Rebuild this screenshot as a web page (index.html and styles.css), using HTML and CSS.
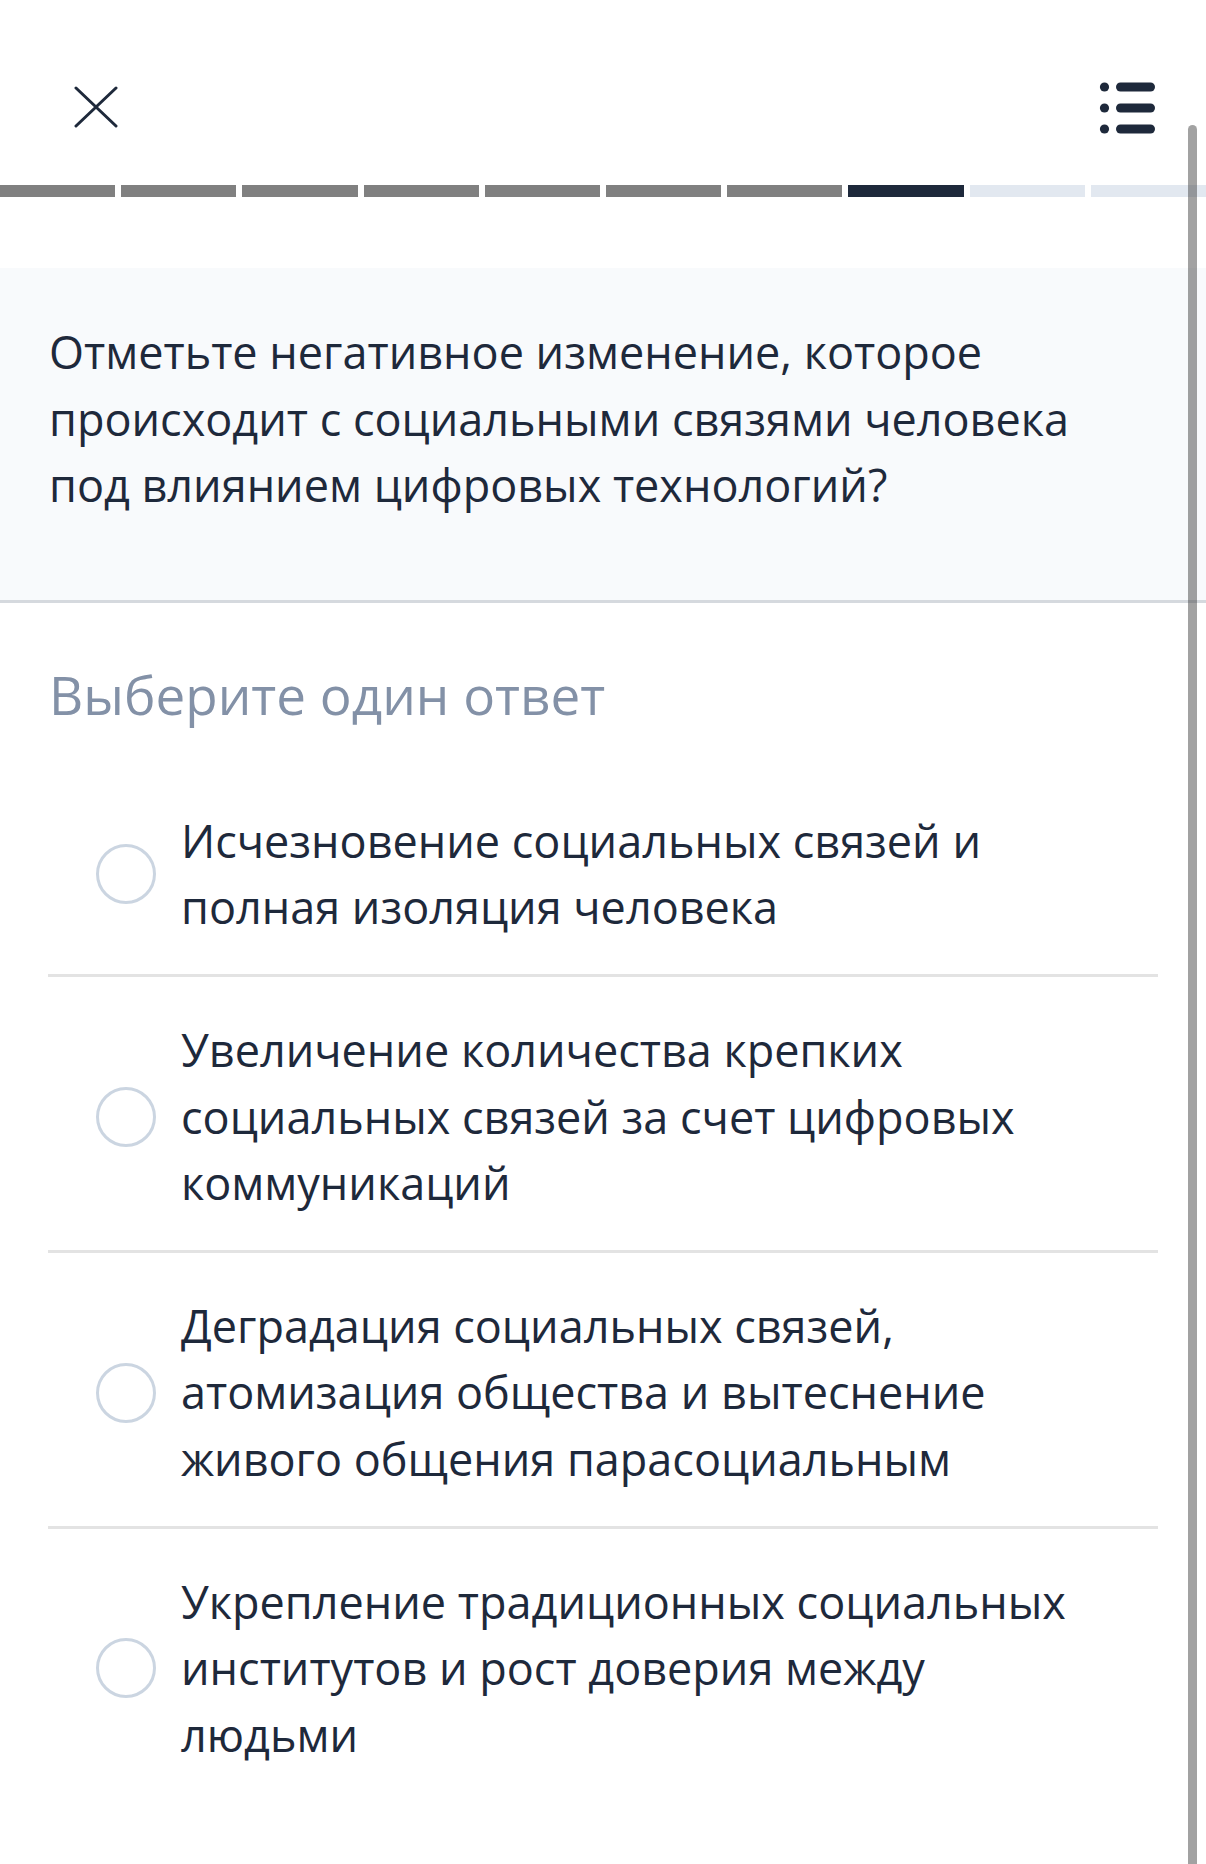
FILE: index.html
```html
<!DOCTYPE html>
<html lang="ru">
<head>
<meta charset="utf-8">
<title>Вопрос</title>
<link rel="stylesheet" href="styles.css">
</head>
<body>
<div class="page">
  <header class="topbar">
    <svg class="icon-close" width="44" height="44" viewBox="0 0 44 44" aria-label="Закрыть">
      <path d="M2 3 L42 41 M42 3 L2 41" stroke="#1e293b" stroke-width="3" stroke-linecap="round" fill="none"/>
    </svg>
    <svg class="icon-list" width="60" height="60" viewBox="0 0 60 60" aria-label="Список">
      <circle cx="6.5" cy="6" r="4.6" fill="#1e293b"/>
      <circle cx="6.5" cy="27" r="4.6" fill="#1e293b"/>
      <circle cx="6.5" cy="48" r="4.6" fill="#1e293b"/>
      <rect x="18" y="1.5" width="39" height="9" rx="4.5" fill="#1e293b"/>
      <rect x="18" y="22.5" width="39" height="9" rx="4.5" fill="#1e293b"/>
      <rect x="18" y="43.5" width="39" height="9" rx="4.5" fill="#1e293b"/>
    </svg>
  </header>

  <div class="progress">
    <span class="seg done"></span>
    <span class="seg done"></span>
    <span class="seg done"></span>
    <span class="seg done"></span>
    <span class="seg done"></span>
    <span class="seg done"></span>
    <span class="seg done"></span>
    <span class="seg current"></span>
    <span class="seg todo"></span>
    <span class="seg todo"></span>
  </div>

  <section class="question">
    <p class="question-text">Отметьте негативное изменение, которое происходит с социальными связями человека под влиянием цифровых технологий?</p>
  </section>

  <h2 class="hint">Выберите один ответ</h2>

  <ul class="options">
    <li class="option">
      <span class="radio"></span>
      <span class="option-text">Исчезновение социальных связей и полная изоляция человека</span>
    </li>
    <li class="option">
      <span class="radio"></span>
      <span class="option-text">Увеличение количества крепких социальных связей за счет цифровых коммуникаций</span>
    </li>
    <li class="option">
      <span class="radio"></span>
      <span class="option-text">Деградация социальных связей, атомизация общества и вытеснение живого общения парасоциальным</span>
    </li>
    <li class="option">
      <span class="radio"></span>
      <span class="option-text">Укрепление традиционных социальных институтов и рост доверия между людьми</span>
    </li>
  </ul>

  <div class="scrollbar"></div>
</div>
</body>
</html>
```

FILE: styles.css
```css
* {
  box-sizing: border-box;
}

html, body {
  margin: 0;
  padding: 0;
  background: #ffffff;
}

body {
  font-family: "Open Sans", "Noto Sans", "DejaVu Sans", sans-serif;
  color: #1e293b;
}

.page {
  position: relative;
  width: 1206px;
  min-height: 1864px;
  overflow: hidden;
}

.topbar {
  height: 185px;
  display: flex;
  justify-content: space-between;
  align-items: flex-start;
  padding: 85px 48px 0 74px;
}

.icon-close {
  display: block;
}

.icon-list {
  display: block;
  margin-top: -4px;
}

.progress {
  display: flex;
  gap: 6px;
  height: 12px;
}

.seg {
  flex: 1 1 0;
  height: 12px;
}

.seg.done {
  background: #808080;
}

.seg.current {
  background: #1e293b;
}

.seg.todo {
  background: #e2e8f0;
}

.question {
  margin-top: 71px;
  background: #f8fafc;
  padding: 51px 60px 81px 49px;
  border-bottom: 3px solid #d5d9de;
}

.question-text {
  margin: 0;
  font-size: 45px;
  line-height: 66.6px;
  color: #1e293b;
}

.hint {
  margin: 60px 0 0 49px;
  font-size: 53px;
  line-height: 64px;
  font-weight: 400;
  color: #8391a7;
}

.options {
  list-style: none;
  margin: 41px 48px 0 48px;
  padding: 0;
}

.option {
  display: flex;
  align-items: center;
  gap: 25px;
  padding: 40px 64px 33px 48px;
  border-bottom: 3px solid #e3e3e3;
}

.option:last-child {
  border-bottom: none;
}

.radio {
  flex: 0 0 60px;
  width: 60px;
  height: 60px;
  border: 3px solid #cbd5e1;
  border-radius: 50%;
  background: #ffffff;
}

.option-text {
  flex: 1 1 auto;
  font-size: 45px;
  line-height: 66.6px;
  color: #1e293b;
}

.scrollbar {
  position: absolute;
  left: 1188px;
  top: 125px;
  width: 9px;
  height: 1760px;
  border-radius: 5px;
  background: rgba(60, 60, 60, 0.48);
}
```
